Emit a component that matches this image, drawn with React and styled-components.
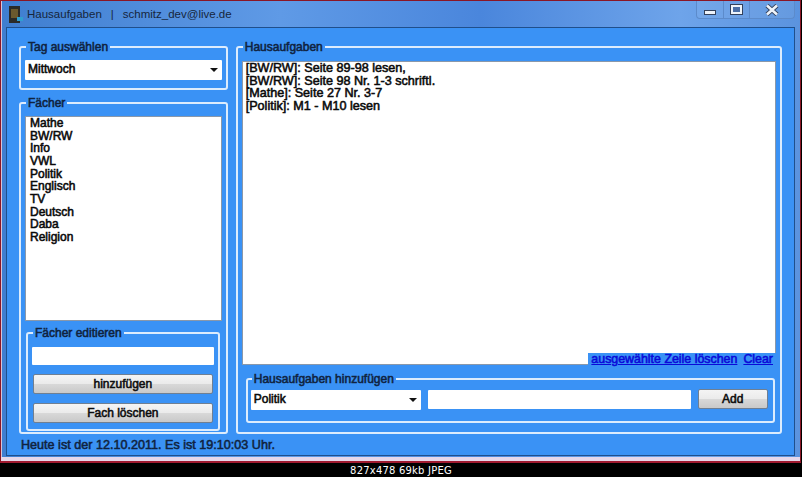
import styled, { createGlobalStyle, css } from 'styled-components';

const subjects = ['Mathe', 'BW/RW', 'Info', 'VWL', 'Politik', 'Englisch', 'TV', 'Deutsch', 'Daba', 'Religion'];

const homework = [
    '[BW/RW]: Seite 89-98 lesen,',
    '[BW/RW]: Seite 98 Nr. 1-3 schriftl.',
    '[Mathe]: Seite 27 Nr. 3-7',
    '[Politik]: M1 - M10 lesen',
];

export default function App() {
    return (
        <Page>
            <GlobalStyle />
            <Window>
                <TitleBar>
                    <AppIcon width="15" height="18" viewBox="0 0 15 18">
                        <rect x="0" y="0" width="11" height="17" fill="#2b2b28" />
                        <rect x="2" y="3" width="7" height="9" fill="#6b5a2e" />
                        <rect x="8" y="11" width="6" height="4" fill="#2f9fd0" />
                    </AppIcon>
                    <TitleText>Hausaufgaben</TitleText>
                    <TitleDivider>|</TitleDivider>
                    <TitleText>schmitz_dev@live.de</TitleText>
                    <WindowControls>
                        <ControlButton $width={27}><MinimizeGlyph /></ControlButton>
                        <ControlButton $width={26}><MaximizeGlyph /></ControlButton>
                        <ControlButton $width={44} $last>
                            <svg width="14" height="12" viewBox="0 0 14 12">
                                <path d="M2 1.5 L12 10.5 M12 1.5 L2 10.5" stroke="#33415c" strokeWidth="4.4" />
                                <path d="M2 1.5 L12 10.5 M12 1.5 L2 10.5" stroke="#eef3fa" strokeWidth="2.6" />
                            </svg>
                        </ControlButton>
                    </WindowControls>
                </TitleBar>
                <Client>
                    <Columns>
                        <LeftColumn>
                            <DayGroup>
                                <Legend>Tag auswählen</Legend>
                                <Select $height={20}>
                                    Mittwoch
                                    <Arrow />
                                </Select>
                            </DayGroup>
                            <SubjectsGroup>
                                <Legend>Fächer</Legend>
                                <SubjectList>
                                    {subjects.map(subject => (
                                        <SubjectRow key={subject}>{subject}</SubjectRow>
                                    ))}
                                </SubjectList>
                                <EditGroup>
                                    <Legend>Fächer editieren</Legend>
                                    <EditInput />
                                    <FormButton>hinzufügen</FormButton>
                                    <FormButton>Fach löschen</FormButton>
                                </EditGroup>
                            </SubjectsGroup>
                        </LeftColumn>
                        <HomeworkGroup>
                            <Legend>Hausaufgaben</Legend>
                            <HomeworkList>
                                {homework.map(line => (
                                    <HomeworkRow key={line}>{line}</HomeworkRow>
                                ))}
                            </HomeworkList>
                            <LinkRow>
                                <TextLink>ausgewählte Zeile löschen</TextLink>
                                <TextLink>Clear</TextLink>
                            </LinkRow>
                            <AddGroup>
                                <Legend>Hausaufgaben hinzufügen</Legend>
                                <AddRow>
                                    <Select $height={20} $width={170}>
                                        Politik
                                        <Arrow />
                                    </Select>
                                    <AddInput />
                                    <AddButton>Add</AddButton>
                                </AddRow>
                            </AddGroup>
                        </HomeworkGroup>
                    </Columns>
                    <StatusText>Heute ist der 12.10.2011. Es ist 19:10:03 Uhr.</StatusText>
                </Client>
            </Window>
            <Caption>827x478 69kb JPEG</Caption>
        </Page>
    );
}

const GlobalStyle = createGlobalStyle`
    html, body {
        margin: 0;
        padding: 0;
        background: #000;
    }
`;

// the screenshot's text is a regular face smeared heavier by the JPEG
const heavyText = css`
    font-size: 12px;
    font-weight: normal;
    -webkit-text-stroke: 0.55px currentColor;
`;

const Page = styled.div`
    width: 802px;
    height: 477px;
    overflow: hidden;
    display: flex;
    flex-direction: column;
    background: #000;
    font-family: "Liberation Sans", Arial, sans-serif;
`;

const Window = styled.div`
    box-sizing: border-box;
    width: 801px;
    height: 463px;
    display: flex;
    flex-direction: column;
    padding: 0 5px 5px 5px;
    border: 1px solid #8a1626;
    border-bottom: 2px solid #a01a30;
    background: linear-gradient(90deg, #3f7ed0 0%, #5f9ae6 35%, #4a86dc 60%, #6ea4ea 85%, #5b93de 100%);
    box-shadow: inset 0 -4px 0 #e6d8ea, inset 1px 0 0 #d9c3d8;
`;

const TitleBar = styled.div`
    height: 26px;
    flex: none;
    display: flex;
    align-items: center;
    padding-left: 3px;
    color: #16263c;
    font-size: 11.5px;
`;

const AppIcon = styled.svg`
    margin-right: 3px;
    margin-top: 1px;
`;

const TitleText = styled.span``;

const TitleDivider = styled.span`
    margin: 0 9px 0 9px;
`;

const WindowControls = styled.div`
    display: flex;
    align-self: flex-start;
    height: 17px;
    margin-left: auto;
    border: 1px solid #5c8bcb;
    border-top: none;
    border-radius: 0 0 4px 4px;
    background: rgba(255, 255, 255, 0.06);
`;

const ControlButton = styled.div`
    box-sizing: border-box;
    width: ${props => props.$width}px;
    display: flex;
    align-items: center;
    justify-content: center;
    border-right: ${props => (props.$last ? 'none' : '1px solid #5c8bcb')};
`;

const MinimizeGlyph = styled.div`
    width: 10px;
    height: 3px;
    margin-top: 5px;
    background: #eef3fa;
    border: 1px solid #33415c;
`;

const MaximizeGlyph = styled.div`
    box-sizing: border-box;
    width: 11px;
    height: 9px;
    border: 2px solid #eef3fa;
    outline: 1px solid #33415c;
    background: #4b6ea6;
`;

const Client = styled.div`
    box-sizing: border-box;
    flex: 1;
    display: flex;
    flex-direction: column;
    padding: 12px 12px 0 12px;
    border: 1px solid #1f4f8c;
    background: #3a92f5;
`;

const Columns = styled.div`
    display: flex;
    gap: 8px;
    height: 396px;
`;

const LeftColumn = styled.div`
    width: 209px;
    display: flex;
    flex-direction: column;
    gap: 6px;
`;

const Group = styled.fieldset`
    box-sizing: border-box;
    min-width: 0;
    margin: 0;
    border: 2px solid #dcecfd;
    border-radius: 3px;
`;

const Legend = styled.legend`
    ${heavyText}
    padding: 0 2px;
    margin-left: 1px;
    height: 14px;
    line-height: 14px;
    white-space: nowrap;
    color: #10233f;
`;

const DayGroup = styled(Group)`
    height: 50px;
    padding: 6px 4px 0;
`;

const SubjectsGroup = styled(Group)`
    height: 338px;
    padding: 6px 4px 0;
`;

const SubjectList = styled.div`
    box-sizing: border-box;
    height: 205px;
    padding: 0 4px;
    background: #fff;
    border: 1px solid #8a98aa;
`;

const SubjectRow = styled.div`
    ${heavyText}
    height: 12.67px;
    line-height: 12.67px;
    color: #0a0a0a;
`;

const EditGroup = styled(Group)`
    height: 105px;
    margin: 5px 2px 0 1px;
    padding: 7px 4px 0;
    display: flex;
    flex-direction: column;
`;

const EditInput = styled.div`
    height: 18px;
    background: #fff;
    border-radius: 1px;
`;

const FormButton = styled.div`
    ${heavyText}
    box-sizing: border-box;
    height: 20px;
    margin: 9px 1px 0 1px;
    display: flex;
    align-items: center;
    justify-content: center;
    border: 1px solid #6f7f92;
    border-radius: 2px;
    background: linear-gradient(180deg, #f4f4f4 0%, #ebebeb 48%, #d8d8d8 52%, #c9c9c9 100%);
    color: #0d0d0d;
`;

const Select = styled.div`
    ${heavyText}
    box-sizing: border-box;
    position: relative;
    height: ${props => props.$height}px;
    width: ${props => (props.$width ? `${props.$width}px` : 'auto')};
    flex: none;
    display: flex;
    align-items: center;
    padding: 0 0 2px 3px;
    background: #fff;
    border-radius: 1px;
    color: #0a0a0a;
`;

const Arrow = styled.span`
    position: absolute;
    right: 4px;
    top: 8px;
    width: 0;
    height: 0;
    border-left: 4px solid transparent;
    border-right: 4px solid transparent;
    border-top: 4px solid #111;
`;

const HomeworkGroup = styled(Group)`
    width: 547px;
    height: 394px;
    padding: 7px 4px 0;
`;

const HomeworkList = styled.div`
    box-sizing: border-box;
    height: 304px;
    padding: 0 3px;
    background: #fff;
    border: 1px solid #8a98aa;
`;

const HomeworkRow = styled.div`
    ${heavyText}
    font-size: 12.6px;
    height: 12.6px;
    line-height: 12.6px;
    white-space: nowrap;
    color: #0a0a0a;
`;

const LinkRow = styled.div`
    display: flex;
    gap: 6px;
    width: fit-content;
    height: 12px;
    margin: -12px 0 0 auto;
    padding: 0 3px;
    position: relative;
    background: #3a92f5;
`;

const TextLink = styled.span`
    ${heavyText}
    font-size: 12.4px;
    color: #0a0ad8;
    line-height: 13px;
    text-decoration: underline;
`;

const AddGroup = styled(Group)`
    height: 51px;
    margin: 7px 1px 0 4px;
    padding: 4px 3px 0;
`;

const AddRow = styled.div`
    display: flex;
    align-items: flex-start;
    gap: 7px;
`;

const AddInput = styled.div`
    width: 263px;
    height: 19px;
    background: #fff;
    border-radius: 1px;
`;

const AddButton = styled(FormButton)`
    width: 70px;
    margin: -1px 0 0 0;
`;

const StatusText = styled.div`
    ${heavyText}
    font-size: 12.6px;
    margin: 2px 0 0 2px;
    color: #10233f;
`;

const Caption = styled.div`
    flex: 1;
    display: flex;
    align-items: center;
    justify-content: center;
    color: #fff;
    font-family: "DejaVu Sans", sans-serif;
    font-size: 10px;
    letter-spacing: 0.2px;
`;
